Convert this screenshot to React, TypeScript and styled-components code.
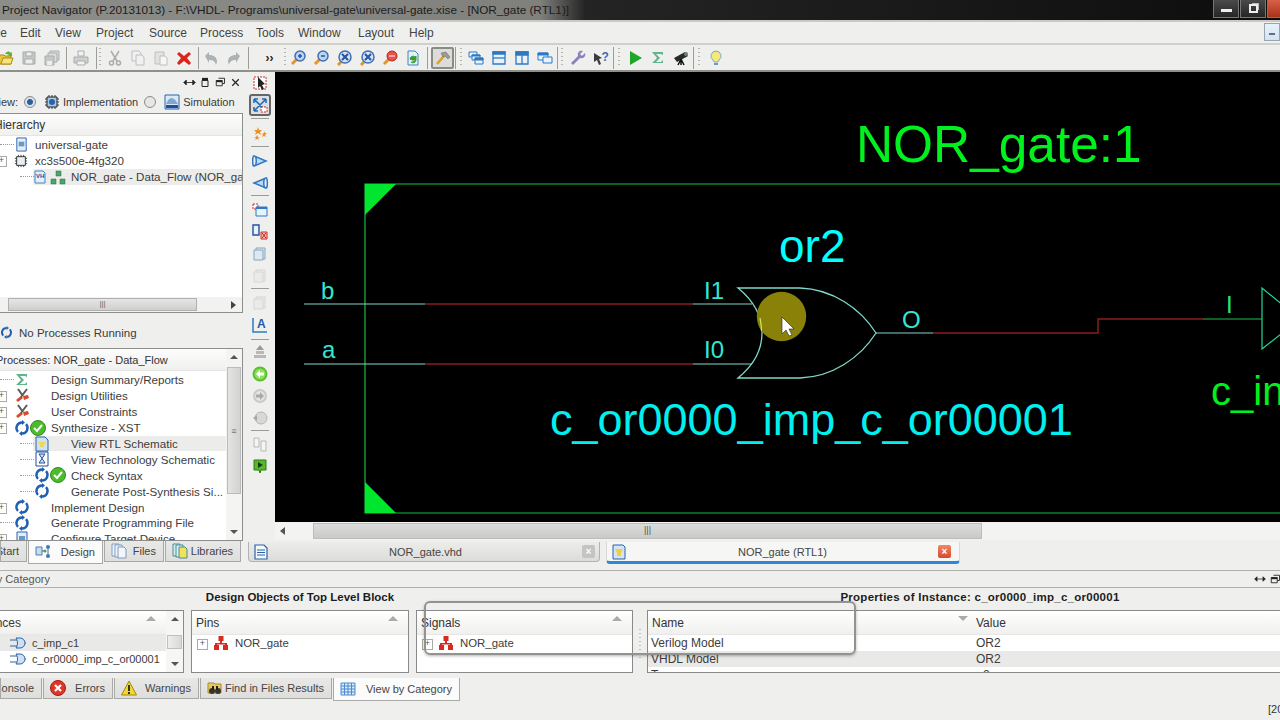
import type React from "react"
import styled, { createGlobalStyle } from "styled-components"

const Global = createGlobalStyle`
  html, body { margin: 0; padding: 0; background: #eff0ee; }
  * { box-sizing: border-box; }
`

const Root = styled.div`
  position: relative;
  width: 1280px;
  height: 720px;
  overflow: hidden;
  display: flex;
  flex-direction: column;
  background: #eff0ee;
  color: #3a3a3a;
  font: 12px "Liberation Sans", Arial, sans-serif;
  white-space: nowrap;
`

const TitleBar = styled.div`
  height: 22px;
  flex: none;
  display: flex;
  padding-left: 2px;
  line-height: 20px;
  color: #1c1c1c;
  font-size: 11.75px;
  border-bottom: 2px solid #c9cac6;
  background: linear-gradient(90deg, #8d8d8a 0, #80807d 540px, #242424 585px, #0d0d0d 100%);
`

const WinControls = styled.div`
  margin-left: auto;
  display: flex;
  height: 18px;
  gap: 1px;
`

const WinBtn = styled.div<{ $close?: boolean }>`
  width: ${(p) => (p.$close ? 13 : 26)}px;
  display: flex;
  align-items: center;
  justify-content: center;
  border: 1px solid #777;
  border-top: none;
  border-right-width: ${(p) => (p.$close ? 0 : 1)}px;
  background: ${(p) => (p.$close ? "linear-gradient(#d8604a, #a83418)" : "linear-gradient(#4a4a4a, #262626)")};
`

const MinBar = styled.div`
  width: 11px;
  height: 3px;
  margin-top: 3px;
  background: #eee;
`

const RestoreMark = styled.div`
  width: 9px;
  height: 9px;
  border: 2px solid #eee;
  box-shadow: 2px -2px 0 -1px #bbb;
`

const MenuBar = styled.div`
  height: 23px;
  flex: none;
  display: flex;
  align-items: center;
  border-bottom: 2px solid #cfd0cc;
  position: relative;
`

const MenuItem = styled.span<{ $w: number }>`
  width: ${(p) => p.$w}px;
  flex: none;
  color: #444;
`

const MdiRestore = styled.div`
  position: absolute;
  right: 0;
  top: 1px;
  width: 16px;
  height: 18px;
  border: 1px solid #9aa4ae;
  background: linear-gradient(#e8f1fa, #d3e4f5);
  display: flex;
  align-items: center;
  justify-content: center;
  &::after {
    content: "";
    width: 6px;
    height: 2px;
    margin-top: 3px;
    background: #607080;
  }
`

const ToolBar = styled.div`
  height: 27px;
  flex: none;
  display: flex;
  align-items: center;
  border-bottom: 2px solid #8f908c;
`

const ToolGroup = styled.div<{ $ml?: number }>`
  display: flex;
  flex: none;
  margin-left: ${(p) => p.$ml ?? 0}px;
`

const ToolBtn = styled.div<{ $on?: boolean }>`
  width: 23px;
  height: 22px;
  flex: none;
  display: flex;
  align-items: center;
  justify-content: center;
  border-radius: 2px;
  ${(p) => p.$on && "border: 2px solid #8a8a86; background: #dcdcd8;"}
`

const Chevrons = styled.span`
  font-weight: bold;
  font-size: 12px;
  color: #222;
`

const ToolSep = styled.div<{ $ml?: number }>`
  width: 1px;
  height: 22px;
  flex: none;
  margin-left: ${(p) => p.$ml ?? 0}px;
  background: #9c9c98;
`

const ToolGrip = styled.div<{ $ml?: number }>`
  width: 2px;
  height: 20px;
  flex: none;
  margin-left: ${(p) => p.$ml ?? 0}px;
  background: repeating-linear-gradient(#b4b4b0 0 1px, transparent 1px 4px);
`

const Main = styled.div`
  height: 494px;
  flex: none;
  display: flex;
`

const LeftCol = styled.div`
  width: 243px;
  flex: none;
  display: flex;
  flex-direction: column;
`

const PanelHead = styled.div`
  height: 20px;
  flex: none;
  display: flex;
  justify-content: flex-end;
  align-items: center;
  gap: 3px;
  padding-right: 1px;
`

const ViewRow = styled.div`
  height: 21px;
  flex: none;
  display: flex;
  align-items: center;
  padding-bottom: 1px;
  font-size: 11px;
`

const ClipLeft = styled.div<{ $w: number }>`
  width: ${(p) => p.$w}px;
  flex: none;
  display: flex;
  justify-content: flex-end;
  overflow: hidden;
`

const Radio = styled.div<{ $on?: boolean; $ml?: number }>`
  width: 12px;
  height: 12px;
  flex: none;
  margin: 0 8px 0 ${(p) => p.$ml ?? 0}px;
  border-radius: 50%;
  border: 1px solid #8a8a8a;
  background: ${(p) => (p.$on ? "radial-gradient(#2d5f96 0 2.5px, #d8e2ee 3.5px)" : "#e6e6e4")};
`

const ViewLabel = styled.span<{ $ml?: number }>`
  margin-left: ${(p) => p.$ml ?? 0}px;
`

const TreeBox = styled.div<{ $h: number }>`
  height: ${(p) => p.$h}px;
  flex: none;
  position: relative;
  overflow: hidden;
  background: #fff;
  border: 1px solid #8d8d8d;
  border-left: none;
`

const BoxHeader = styled.div`
  height: 22px;
  display: flex;
  align-items: center;
  background: linear-gradient(#fdfdfd, #f0f0ee);
  border-bottom: 1px solid #e4e4e2;
  margin-bottom: 1px;
`

const HeaderText = styled.span<{ $ml?: number; $fs?: number }>`
  margin-left: ${(p) => p.$ml ?? 0}px;
  font-size: ${(p) => p.$fs ?? 12}px;
  color: #333;
`

const TreeRow = styled.div<{ $i?: number; $sel?: boolean }>`
  height: 15.9px;
  display: flex;
  align-items: center;
  font-size: 11.6px;
  padding-left: ${(p) => p.$i ?? 0}px;
  background: ${(p) => (p.$sel ? "linear-gradient(90deg, transparent 33px, #ececea 33px)" : "transparent")};
`

const Expander = styled.div<{ $w?: number; $box?: boolean }>`
  width: ${(p) => p.$w ?? 14}px;
  height: 9px;
  flex: none;
  position: relative;
  border-bottom: ${(p) => (p.$box ? "none" : "1px dotted #999")};
  margin-bottom: ${(p) => (p.$box ? 0 : 8)}px;
  &::before {
    content: "${(p) => (p.$box ? "+" : "")}";
    position: absolute;
    left: -4px;
    top: 0;
    width: ${(p) => (p.$box ? 9 : 0)}px;
    height: ${(p) => (p.$box ? 9 : 0)}px;
    border: ${(p) => (p.$box ? "1px solid #aaa" : "none")};
    font: 9px/7px "Liberation Sans", sans-serif;
    text-align: center;
    color: #555;
  }
`

const IconPair = styled.div<{ $w?: number }>`
  width: ${(p) => p.$w ?? 32}px;
  flex: none;
  display: flex;
  align-items: center;
`

const RowLabel = styled.span<{ $ml?: number }>`
  margin-left: ${(p) => p.$ml ?? 5}px;
  color: #3c3c3c;
`

const HScroll = styled.div`
  position: absolute;
  left: 0;
  right: 0;
  bottom: 0;
  height: 15px;
  background: #f2f2f0;
  display: flex;
  align-items: center;
`

const HThumb = styled.div`
  margin-left: 8px;
  width: 189px;
  height: 13px;
  border: 1px solid #b0b0ae;
  background: linear-gradient(#e6e6e4, #cfcfcd);
  text-align: center;
  font: 8px/10px "Liberation Sans", sans-serif;
  color: #666;
`

const ArrowRight = styled.div`
  margin-left: 34px;
  width: 0;
  height: 0;
  border-left: 5px solid #444;
  border-top: 4px solid transparent;
  border-bottom: 4px solid transparent;
`

const StatusRow = styled.div`
  height: 35px;
  flex: none;
  display: flex;
  align-items: center;
  gap: 6px;
  padding: 4px 0 0 0;
  color: #3c3c3c;
  font-size: 11.5px;
`

const VScroll = styled.div`
  position: absolute;
  right: 0;
  top: 0;
  bottom: 0;
  width: 16px;
  background: #f4f4f2;
  display: flex;
  flex-direction: column;
  align-items: center;
`

const VArrow = styled.div<{ $down?: boolean }>`
  width: 0;
  height: 0;
  margin: 6px 0;
  border-left: 4px solid transparent;
  border-right: 4px solid transparent;
  ${(p) => (p.$down ? "border-top: 4px solid #555;" : "border-bottom: 4px solid #555;")}
`

const VThumb = styled.div`
  width: 14px;
  height: 127px;
  margin-top: 2px;
  border: 1px solid #bbb;
  background: linear-gradient(90deg, #e4e4e2, #d2d2d0);
  margin-bottom: auto;
  display: flex;
  align-items: center;
  justify-content: center;
  color: #777;
  font-size: 9px;
`

const TabStrip = styled.div<{ $ml?: number }>`
  display: flex;
  flex: none;
  height: 24px;
  margin-left: ${(p) => p.$ml ?? 0}px;
`

const BottomTab = styled.div<{ $w: number; $on?: boolean; $pl?: number }>`
  width: ${(p) => p.$w}px;
  flex: none;
  display: flex;
  align-items: center;
  justify-content: space-between;
  padding: 0 7px 0 ${(p) => p.$pl ?? 6}px;
  margin-right: 1px;
  height: ${(p) => (p.$on ? 23 : 21)}px;
  background: ${(p) => (p.$on ? "#fbfbfb" : "linear-gradient(#e8e8e6, #dededc)")};
  border: 1px solid #a9a9a7;
  border-top: none;
  color: #444;
  font-size: 11px;
  overflow: hidden;
`

const RightCol = styled.div`
  flex: 1;
  min-width: 0;
  margin-left: 5px;
  display: flex;
  flex-direction: column;
`

const WorkRow = styled.div`
  height: 468px;
  flex: none;
  display: flex;
`

const Strip = styled.div`
  width: 24px;
  flex: none;
  margin-right: 3px;
  display: flex;
  flex-direction: column;
  align-items: center;
`

const StripBtn = styled.div<{ $on?: boolean }>`
  width: 22px;
  height: 22px;
  flex: none;
  display: flex;
  align-items: center;
  justify-content: center;
  border-radius: 3px;
  ${(p) => p.$on && "border: 2px solid #66666a; background: #dedede;"}
`

const StripSep = styled.div<{ $mt?: number; $mb?: number }>`
  width: 18px;
  height: 1px;
  flex: none;
  margin: ${(p) => p.$mt ?? 2}px 0 ${(p) => p.$mb ?? 3}px;
  background: #9b9b98;
`

const CanvasCol = styled.div`
  flex: 1;
  min-width: 0;
  display: flex;
  flex-direction: column;
`

const CanvasSvg = styled.svg`
  display: block;
  width: 1005px;
  height: 450px;
  flex: none;
  background: #000;
`

const CanvasScroll = styled.div`
  height: 18px;
  flex: none;
  display: flex;
  align-items: center;
  background: #f3f3f1;
  padding-left: 5px;
`

const ArrowLeft = styled.div`
  width: 0;
  height: 0;
  border-right: 5px solid #555;
  border-top: 4px solid transparent;
  border-bottom: 4px solid transparent;
`

const CanvasThumb = styled.div`
  width: 669px;
  height: 16px;
  margin-left: 28px;
  border: 1px solid #bcbcba;
  background: linear-gradient(#dcdcda, #cacac8);
  text-align: center;
  color: #555;
  font: 9px/13px "Liberation Sans", sans-serif;
`

const EditorTabs = styled.div`
  height: 26px;
  flex: none;
  display: flex;
  padding-top: 2px;
  gap: 6px;
`

const EditorTab = styled.div<{ $on?: boolean; $w: number }>`
  width: ${(p) => p.$w}px;
  height: ${(p) => (p.$on ? 22 : 20)}px;
  flex: none;
  display: flex;
  align-items: center;
  padding: 0 ${(p) => (p.$on ? 8 : 4)}px 0 4px;
  border-radius: 0 0 4px 4px;
  border: 1px solid #b2b2b0;
  border-top: none;
  font-size: 11px;
  background: ${(p) => (p.$on ? "#f6f6f4" : "linear-gradient(#ececea, #dcdcda)")};
  ${(p) => p.$on && "border-color: #d8d8d6; border-bottom: 3px solid #2f86d6;"}
`

const EditorName = styled.span`
  flex: 1;
  text-align: center;
  color: #444;
`

const CloseBtn = styled.div<{ $red?: boolean }>`
  width: 13px;
  height: 13px;
  flex: none;
  border-radius: 2px;
  display: flex;
  align-items: center;
  justify-content: center;
  color: #fff;
  font: bold 10px/1 "Liberation Sans", sans-serif;
  background: ${(p) => (p.$red ? "linear-gradient(#f0866a, #d8492a)" : "#c4c4c2")};
`

const Lower = styled.div`
  flex: 1;
  display: flex;
  flex-direction: column;
  padding-top: 4px;
`

const LowerHead = styled.div`
  height: 18px;
  flex: none;
  display: flex;
  align-items: center;
  justify-content: space-between;
  border-top: 1px solid #b0b0ae;
  border-bottom: 1px solid #b0b0ae;
  font-size: 11px;
  color: #555;
`

const LowerHeadIcons = styled.div`
  display: flex;
  gap: 3px;
  margin-right: -1px;
`

const PaneTitles = styled.div`
  height: 22px;
  flex: none;
  display: flex;
  align-items: center;
  padding-bottom: 4px;
`

const PaneTitle = styled.div<{ $w: number; $ml?: number; $ls?: number }>`
  width: ${(p) => p.$w}px;
  margin-left: ${(p) => p.$ml ?? 0}px;
  letter-spacing: ${(p) => p.$ls ?? 0}px;
  text-align: center;
  font-weight: bold;
  font-size: 11.5px;
  color: #1c1c1c;
`

const Tables = styled.div`
  height: 63px;
  flex: none;
  display: flex;
  margin-left: -1px;
`

const TableBox = styled.div<{ $w: number; $ml?: number }>`
  width: ${(p) => p.$w}px;
  flex: none;
  margin-left: ${(p) => p.$ml ?? 0}px;
  position: relative;
  overflow: hidden;
  background: #fff;
  border: 1px solid #8a8a8a;
`

const TableHead = styled.div`
  height: 24px;
  display: flex;
  align-items: center;
  position: relative;
  background: linear-gradient(#fff, #f0f0ee);
  border-bottom: 1px solid #e6e6e4;
`

const HeadCell = styled.div<{ $w?: number; $pl?: number }>`
  width: ${(p) => (p.$w ? `${p.$w}px` : "auto")};
  flex: none;
  padding-left: ${(p) => p.$pl ?? 4}px;
  color: #333;
`

const SortMark = styled.div<{ $right: number; $down?: boolean }>`
  position: absolute;
  right: ${(p) => p.$right}px;
  top: 5px;
  width: 0;
  height: 0;
  border-left: 5px solid transparent;
  border-right: 5px solid transparent;
  ${(p) => (p.$down ? "border-top: 5px solid #aaa;" : "border-bottom: 5px solid #aaa;")}
`

const DataRow = styled.div<{ $shade?: boolean }>`
  height: 16px;
  display: flex;
  align-items: center;
  background: ${(p) => (p.$shade ? "#e9e9e7" : "transparent")};
  color: #3c3c3c;
`

const DataCell = styled.div<{ $w?: number; $pl?: number; $fs?: number }>`
  width: ${(p) => (p.$w ? `${p.$w}px` : "auto")};
  flex: none;
  display: flex;
  align-items: center;
  font-size: ${(p) => p.$fs ?? 12}px;
  padding-left: ${(p) => p.$pl ?? 3}px;
`

const TableScroll = styled.div`
  position: absolute;
  right: 0;
  top: 0;
  bottom: 0;
  width: 17px;
  background: #f6f6f4;
  display: flex;
  flex-direction: column;
  align-items: center;
`

const TableThumb = styled.div`
  width: 15px;
  height: 14px;
  margin: 8px 0 auto;
  border: 1px solid #c0c0be;
  background: linear-gradient(90deg, #eee, #d8d8d6);
`

const PaneGrip = styled.div`
  position: absolute;
  left: 639px;
  top: 629px;
  width: 2px;
  height: 30px;
  background: repeating-linear-gradient(#c0c0be 0 1px, transparent 1px 4px);
`

const BottomTabs = styled(TabStrip)`
  margin-top: 5px;
  align-items: flex-start;
`

const Corner = styled.div`
  padding: 1px 0 0 1268px;
  font-size: 11px;
  color: #333;
`

const Highlight = styled.div`
  position: absolute;
  left: 424px;
  top: 601px;
  width: 432px;
  height: 54px;
  border: 2px solid #92928f;
  border-radius: 6px;
  box-shadow: 0 1px 3px rgba(0, 0, 0, 0.3);
  pointer-events: none;
`

const Glyph = styled.svg<{ $faded?: boolean }>`
  display: block;
  flex: none;
  opacity: ${(p) => (p.$faded ? 0.45 : 1)};
`

const blue = "#2f78c4"
const grey = "#a9adad"
const org = "#e8922a"

const paths: Record<string, React.ReactNode> = {
  open: (
    <>
      <path d="M1 5h5l1 1h6v8H1z" fill="#e8c53a" stroke="#a88a1a" />
      <path d="M3 14l2-6h10l-2 6z" fill="#f7e37a" stroke="#a88a1a" />
      <path d="M7 4c2-3 4-3 6-1l1-1v4h-4l1-1c-1-1-2-1-4-1z" fill="#5cb52c" />
    </>
  ),
  save: (
    <>
      <path d="M2 2h12v12H2z" fill="#c4c8c8" stroke={grey} />
      <path d="M5 2h6v4H5zM4 9h8v5H4z" fill="#eee" stroke={grey} />
    </>
  ),
  saveall: (
    <>
      <path d="M6 1h9v9H6z" fill="#ddd" stroke={grey} />
      <path d="M4 3h9v9H4z" fill="#ddd" stroke={grey} />
      <path d="M1 6h9v9H1z" fill="#c4c8c8" stroke={grey} />
      <path d="M3 11h5v4H3z" fill="#eee" />
    </>
  ),
  print: (
    <>
      <path d="M5 1h6v5H5z" fill="#f2f2f2" stroke={grey} />
      <path d="M1 7h14v6H1z" fill="#cdd0d0" stroke={grey} />
      <path d="M4 11h8v4H4z" fill="#f2f2f2" stroke={grey} />
    </>
  ),
  cut: (
    <g fill="none" stroke="#a8acac" strokeWidth="1.5">
      <path d="M4 1l6 10M12 1L6 11" />
      <circle cx="4.5" cy="13" r="2" />
      <circle cx="11.5" cy="13" r="2" />
    </g>
  ),
  copy: (
    <g fill="#f1f1f1" stroke="#bcc0c0">
      <path d="M2 1h7l2 2v8H2z" />
      <path d="M6 5h6l2 2v8H6z" />
    </g>
  ),
  paste: (
    <g stroke="#bcc0c0">
      <path d="M2 2h9v12H2z" fill="#e2e2e0" />
      <path d="M7 6h5l2 2v7H7z" fill="#f6f6f6" />
    </g>
  ),
  del: <path d="M3 2l5 4 5-4 2 2-4 4 4 5-2 2-5-4-5 4-2-2 4-5-4-4z" fill="#d9261c" />,
  undo: <path d="M2 5l4-4v3c5 0 8 2 8 7l-1 3c-1-4-3-5-7-5v3z" transform="translate(0 1)" fill="#adb2b4" />,
  redo: <path d="M14 5l-4-4v3c-5 0-8 2-8 7l1 3c1-4 3-5 7-5v3z" transform="translate(0 1)" fill="#adb2b4" />,
  zoomin: (
    <>
      <path d="M2 14l5-5" stroke={org} strokeWidth="3" />
      <circle cx="10" cy="6" r="5" fill="#bcd6f2" stroke="#3f6fb4" strokeWidth="1.5" />
      <path d="M8 6h4M10 4v4" stroke="#2a52a0" strokeWidth="1.5" />
    </>
  ),
  zoomout: (
    <>
      <path d="M2 14l5-5" stroke={org} strokeWidth="3" />
      <circle cx="10" cy="6" r="5" fill="#bcd6f2" stroke="#3f6fb4" strokeWidth="1.5" />
      <path d="M8 6h4" stroke="#2a52a0" strokeWidth="1.5" />
    </>
  ),
  zoomfull: (
    <>
      <path d="M2 15l3-3" stroke={org} strokeWidth="3" />
      <circle cx="9" cy="7" r="6" fill="#d4e4f6" stroke="#3f6fb4" strokeWidth="1.5" />
      <path d="M6 4l6 6M12 4l-6 6" stroke="#2a52a0" strokeWidth="2" />
    </>
  ),
  zoomred: (
    <>
      <path d="M2 14l5-5" stroke={org} strokeWidth="3" />
      <circle cx="10" cy="6" r="5" fill="#e85048" stroke="#b02820" />
      <path d="M7 6h6" stroke="#fff" />
    </>
  ),
  refresh: (
    <>
      <path d="M3 1h7l3 3v11H3z" fill="#e4f0fa" stroke="#3f84c4" />
      <path d="M5 9a3 3 0 0 1 5-2l1-1v4H7l1-1a2 2 0 0 0-2 1zM11 10a3 3 0 0 1-5 2" stroke="#36a02c" fill="#36a02c" />
    </>
  ),
  hammer: (
    <>
      <path d="M2 14l7-8" stroke="#e0a020" strokeWidth="2.5" />
      <path d="M6 3l5-1 4 5-2 2-3-3-2 1z" fill="#9a9a96" stroke="#666" strokeWidth=".5" />
    </>
  ),
  cascade: (
    <g fill="#e8f2fb" stroke={blue}>
      <path d="M1 2h8v5H1z" />
      <path d="M4 5h8v5H4z" />
      <path d="M7 8h8v6H7z" />
      <path d="M7 8h8v2H7zM4 5h8v1H4z" fill={blue} />
    </g>
  ),
  hsplit: (
    <g fill="#e8f2fb" stroke={blue} strokeWidth="1.3">
      <path d="M2 2h12v12H2z" />
      <path d="M2 8h12" />
      <path d="M2 2h12v2H2z" fill={blue} />
    </g>
  ),
  vsplit: (
    <g fill="#e8f2fb" stroke={blue} strokeWidth="1.3">
      <path d="M2 2h12v12H2z" />
      <path d="M8 2v12" />
      <path d="M2 2h12v3H2z" fill={blue} />
    </g>
  ),
  tile: (
    <g fill="#e8f2fb" stroke={blue}>
      <path d="M1 3h10v7H1z" />
      <path d="M6 7h9v6H6z" />
      <path d="M1 3h10v2H1z" fill={blue} />
    </g>
  ),
  wrench: <path d="M15 3l-3 3-2-2 3-3c-3-1-6 1-5 5l-7 7 2 2 7-7c4 1 6-2 5-5z" fill="#8e80c0" />,
  help: (
    <>
      <path d="M1 3l8 5-3 1 2 5-2 1-2-5-3 2z" fill="#3a3a40" />
      <text x="8.5" y="11" fontSize="12" fontWeight="bold" fill="#3c6cb4" fontFamily="Liberation Sans">?</text>
    </>
  ),
  play: <path d="M3 1l12 7-12 7z" fill="#1fa52a" />,
  sigma: <path d="M2 2h11v3l-2-1H6l4 4-4 4h5l2-2v3H2l5-5z" fill="#62b48c" />,
  telescope: (
    <>
      <path d="M1 8l11-6 3 4-11 6z" fill="#2a2a2a" />
      <circle cx="13" cy="4" r="2" fill="#6d7f80" />
      <path d="M8 9l-3 6M8 9l3 6M8 9v6" stroke="#111" strokeWidth="1.5" />
    </>
  ),
  bulb: (
    <>
      <path d="M8 1a5 5 0 0 1 3 9l-1 2H6l-1-2a5 5 0 0 1 3-9z" fill="#f5e97a" stroke="#7ea8c8" />
      <path d="M6 13h4v2H6z" fill="#6c98c0" />
    </>
  ),
  select: (
    <>
      <path d="M2 2h12v12H2z" fill="#fff" stroke="#d02a2a" strokeDasharray="2 1" />
      <path d="M6 2l7 7-3 1 2 4-2 1-2-4-2 2z" fill="#222" />
    </>
  ),
  fit: (
    <>
      <path d="M2 2l11 11M14 2L3 13M2 2h4M2 2v4M14 2h-4M14 2v4M2 14h4M2 14v-4" stroke="#1d6fc0" strokeWidth="1.6" fill="none" />
      <path d="M9 10h6v5H9z" fill="#fff" stroke="#d02a2a" strokeDasharray="2 1" />
    </>
  ),
  stars: <path d="M6 2l1 3h3l-2 2 1 3-3-2-3 2 1-3-2-2h3zM12 6l1 2h2l-2 2 1 2-2-1-2 1 1-2-1-1 2-1zM5 10l1 2h2l-2 1 1 2-2-1-2 1 1-2-2-1h2z" fill={org} />,
  gateR: <path d="M2 3c3-1 3 11 0 10l12-5zM2 3c-2 1-2 9 0 10" fill="#bcd8f2" stroke={blue} strokeWidth="1.5" />,
  gateL: <path d="M14 3c-3-1-3 11 0 10L2 8zM14 3c2 1 2 9 0 10" fill="#bcd8f2" stroke={blue} strokeWidth="1.5" />,
  selA: (
    <>
      <path d="M1 2h5v5H1z" fill="#fff" stroke="#d02a2a" strokeDasharray="2 1" />
      <path d="M4 5h11v9H4z" fill="#e8f2fb" stroke={blue} />
      <path d="M4 5h11v2H4z" fill={blue} />
    </>
  ),
  selB: (
    <>
      <path d="M1 1h6v10H1z" fill="#e8f2fb" stroke="#2450a0" strokeWidth="1.4" />
      <path d="M9 8h6v7H9z" fill="#f4c8b8" stroke="#d02a2a" />
      <path d="M10 9l4 5M14 9l-4 5" stroke="#b02020" />
    </>
  ),
  docA: (
    <g fill="#dce8f2" stroke="#8aa4bc">
      <path d="M4 2h9v11H4z" />
      <path d="M2 4h9v10H2z" />
    </g>
  ),
  docB: (
    <g fill="#e4e4e2" stroke="#b8b8b6">
      <path d="M4 2h9v11H4z" />
      <path d="M2 4h9v10H2z" />
    </g>
  ),
  upA: (
    <>
      <path d="M8 1l4 5H4z" fill="#9a9a98" />
      <path d="M4 7h8v3H4zM2 11h12v3H2z" fill="#b8b8b6" />
    </>
  ),
  textA: (
    <>
      <path d="M1 1v14h14" fill="none" stroke={blue} strokeWidth="1.5" />
      <text x="5" y="11" fontSize="12" fontWeight="bold" fill="#1e5ca8" fontFamily="Liberation Sans">A</text>
    </>
  ),
  backGreen: (
    <>
      <circle cx="8" cy="8" r="7.5" fill="#58c02c" />
      <circle cx="8" cy="8" r="5.5" fill="#8ede5e" />
      <path d="M4 8l4-4v2.5h4v3H8V12z" fill="#fff" />
    </>
  ),
  fwdGrey: (
    <>
      <circle cx="8" cy="8" r="7" fill="#c8cac8" />
      <circle cx="8" cy="8" r="5" fill="#e4e4e2" />
      <path d="M12 8L8 4v2.5H4v3h4V12z" fill="#a8aaa8" />
    </>
  ),
  histGrey: (
    <>
      <circle cx="9" cy="8" r="6" fill="#d8d8d6" stroke="#b4b4b2" />
      <path d="M1 8l4-3v6z" fill="#a8a8a6" />
    </>
  ),
  squares: (
    <g fill="#f4f4f2" stroke="#b8b8b6">
      <path d="M2 2h5v9H2z" />
      <path d="M9 5h5v10H9z" />
    </g>
  ),
  flag: (
    <>
      <path d="M2 2h12v10H9l-1 3-1-3H2z" fill="#58b82c" stroke="#2c7a12" />
      <path d="M6 4l5 3-5 3z" fill="#143c0c" />
    </>
  ),
  spin: (
    <g fill="none" stroke="#1f5fb4" strokeWidth="2.4">
      <path d="M8 2.5a5.5 5.5 0 0 0-4 9.3" />
      <path d="M8 13.5a5.5 5.5 0 0 0 4-9.3" />
      <path d="M8 0v5l3-2.5zM8 16v-5l-3 2.5z" fill="#1f5fb4" stroke="none" />
    </g>
  ),
  ok: (
    <>
      <circle cx="8" cy="8" r="7.5" fill="#4cbb2c" stroke="#2c8c18" />
      <path d="M4 8l3 3 5-6" stroke="#fff" strokeWidth="2" fill="none" />
    </>
  ),
  tools: (
    <>
      <path d="M2 12l5-4 2 2-5 4z" fill="#d8492a" />
      <path d="M9 8l5-1 1 3-5 2z" fill="#d8492a" />
      <path d="M4 1l5 7M13 1L7 9" stroke="#5a5a58" strokeWidth="2" />
    </>
  ),
  rtl: (
    <>
      <path d="M2 1h9l3 3v11H2z" fill="#cfe2f4" stroke="#2a62a8" />
      <path d="M4 6h8l-2 3v2H6V9z" fill="#ecd85a" />
    </>
  ),
  tech: (
    <>
      <path d="M2 1h12v14H2z" fill="#fff" stroke="#1e4f98" />
      <path d="M5 3h6L5 12h6z" fill="#d6e4f2" stroke="#1e4f98" />
    </>
  ),
  blockA: (
    <>
      <path d="M1 2h8l2 2v10H1z" fill="#e4effa" stroke="#3f84c4" />
      <text x="2" y="9" fontSize="6" fontWeight="bold" fill="#1e4f98" fontFamily="Liberation Sans">VH</text>
    </>
  ),
  blockB: <path d="M6 2h5v5H6zM1 10h5v5H1zM10 10h5v5h-5z" fill="#4aa56c" stroke="#2c6c40" strokeWidth=".5" />,
  project: (
    <>
      <path d="M3 1h10v14H3z" fill="#e4eef8" stroke="#2a62a8" />
      <path d="M5 5h6v5H5z" fill="#6a98c8" />
    </>
  ),
  chip: (
    <>
      <path d="M3 3h10v10H3z" fill="#e6eef4" stroke="#222" />
      <path d="M1 5h2M1 8h2M1 11h2M13 5h2M13 8h2M13 11h2M5 1v2M8 1v2M11 1v2M5 13v2M8 13v2M11 13v2" stroke="#333" />
    </>
  ),
  impl: (
    <>
      <path d="M3 3h10v10H3z" fill="#a8c8e8" stroke="#222" />
      <path d="M1 5h2M1 8h2M1 11h2M13 5h2M13 8h2M13 11h2M5 1v2M8 1v2M11 1v2M5 13v2M8 13v2M11 13v2" stroke="#333" />
      <circle cx="8" cy="8" r="3" fill="#2a62a8" />
    </>
  ),
  sim: (
    <>
      <path d="M1 1h14v14H1z" fill="#dce8f4" stroke="#2a62a8" />
      <path d="M2 10c3-8 8-8 12 0z" fill="#7ea8d0" />
      <path d="M2 11h12v3H2z" fill="#1e4f98" />
    </>
  ),
  design: (
    <>
      <path d="M1 3h6v8H1z" fill="#c8dcf0" stroke="#4a7cb4" />
      <circle cx="13" cy="3" r="2" fill="#3a78b8" />
      <circle cx="13" cy="12" r="2" fill="#3a78b8" />
      <path d="M7 7h3M13 5v5" stroke="#666" />
      <circle cx="10" cy="7" r="1.5" fill="#48a060" />
    </>
  ),
  files: (
    <g fill="#f2f6fa" stroke="#7d9cc0">
      <path d="M1 1h7v12H1z" />
      <path d="M4 2h7v12H4z" />
      <path d="M7 4h6l2 2v9H7z" />
    </g>
  ),
  libs: (
    <g stroke="#4a8a98">
      <path d="M1 1h7v12H1z" fill="#d4eef4" />
      <path d="M4 2h7v12H4z" fill="#e0f2f0" />
      <path d="M7 4h6l2 2v9H7z" fill="#f2e25a" />
    </g>
  ),
  page: (
    <>
      <path d="M2 1h9l3 3v11H2z" fill="#f2f8fd" stroke="#2a62a8" strokeWidth="1.2" />
      <path d="M4 6h8M4 8.5h8M4 11h8" stroke="#2a62a8" />
    </>
  ),
  rtlTab: (
    <>
      <path d="M2 1h10l2 2v12H2z" fill="#d4e4f4" stroke="#2a62a8" />
      <path d="M4 5h8l-2 4v3H6V9z" fill="#f0d040" />
    </>
  ),
  net: <path d="M5.5 1h5v5h-5zM7 6h2v2h5v2h1v5h-5v-5h2V9.5H4V10h2v5H1v-5h1V8h5z" fill="#d92a20" />,
  inst: (
    <>
      <path d="M0 5h8M0 11h8" stroke="#2a62a8" />
      <path d="M6 3h4a5 5 0 0 1 0 10H6c2-3 2-7 0-10zM15 8h1" fill="#cfe0f2" stroke="#2a62a8" />
    </>
  ),
  errors: (
    <>
      <circle cx="8" cy="8" r="7.5" fill="#e0362a" stroke="#a01810" />
      <path d="M5 5l6 6M11 5l-6 6" stroke="#fff" strokeWidth="2.2" />
    </>
  ),
  warn: (
    <>
      <path d="M8 1l7.5 14H.5z" fill="#f4d630" stroke="#a08810" />
      <path d="M8 5v6M8 12v2" stroke="#222" strokeWidth="1.8" />
    </>
  ),
  find: (
    <>
      <path d="M1 3h6l1 1h6v9H1z" fill="#e8c860" stroke="#a88a30" />
      <circle cx="5" cy="11" r="3" fill="#333" />
      <circle cx="11" cy="11" r="3" fill="#333" />
      <path d="M5 6h2v4H5zM9 6h2v4H9z" fill="#222" />
    </>
  ),
  grid: (
    <g fill="#dcebf9" stroke="#4a8ad0">
      <path d="M1 2h14v12H1z" />
      <path d="M1 5h14M1 8h14M1 11h14M4.5 2v12M8 2v12M11.5 2v12" fill="none" />
    </g>
  ),
  dock: (
    <g fill="none" stroke="#222" strokeWidth="1.3">
      <path d="M4 6h8v8H4z" />
      <path d="M4 4h8" strokeWidth="3" />
    </g>
  ),
  float: (
    <g fill="none" stroke="#222" strokeWidth="1.2">
      <path d="M6 3h8v7h-3" />
      <path d="M3 6h8v7H3z" />
      <path d="M3 7h8" strokeWidth="2.5" />
    </g>
  ),
  close: <path d="M4 4l8 8M12 4l-8 8" stroke="#222" strokeWidth="1.5" />,
  arrows: <path d="M1 8h14M1 8l3-3v6zM15 8l-3-3v6z" fill="#222" stroke="#222" />,
}

const Icon = ({ n, s = 16, faded }: { n: string; s?: number; faded?: boolean }) => (
  <Glyph viewBox="0 0 16 16" width={s} height={s} $faded={faded}>
    {paths[n]}
  </Glyph>
)

const menus: [string, number][] = [
  ["File", 20],
  ["Edit", 35],
  ["View", 41],
  ["Project", 53],
  ["Source", 51],
  ["Process", 56],
  ["Tools", 42],
  ["Window", 60],
  ["Layout", 51],
  ["Help", 40],
]

const Tool = ({ n, on }: { n: string; on?: boolean }) => (
  <ToolBtn $on={on}>
    <Icon n={n} />
  </ToolBtn>
)

const StripIcon = ({ n, on, faded }: { n: string; on?: boolean; faded?: boolean }) => (
  <StripBtn $on={on}>
    <Icon n={n} faded={faded} />
  </StripBtn>
)

type ProcRow = { label: string; icons: string[]; exp?: boolean; i?: number; sel?: boolean }

const processRows: ProcRow[] = [
  { label: "Design Summary/Reports", icons: ["sigma"] },
  { label: "Design Utilities", icons: ["tools"], exp: true },
  { label: "User Constraints", icons: ["tools"], exp: true },
  { label: "Synthesize - XST", icons: ["spin", "ok"], exp: true },
  { label: "View RTL Schematic", icons: ["rtl"], i: 20, sel: true },
  { label: "View Technology Schematic", icons: ["tech"], i: 20 },
  { label: "Check Syntax", icons: ["spin", "ok"], i: 20 },
  { label: "Generate Post-Synthesis Si...", icons: ["spin"], i: 20 },
  { label: "Implement Design", icons: ["spin"], exp: true },
  { label: "Generate Programming File", icons: ["spin"] },
  { label: "Configure Target Device", icons: ["project"], exp: true },
]

const wire = "#7fd8c8"
const dark = "#8c1c1c"

const Schematic = () => (
  <CanvasSvg viewBox="275 72 1005 450" fontFamily="Liberation Sans, Arial, sans-serif">
    <path d="M1300 184H365V513H1300" stroke="#12c23a" strokeWidth="1.2" fill="none" />
    <path d="M365 184h31l-31 31zM365 513h31l-31-31z" fill="#00e62e" />
    <text x="856" y="162" fontSize="51.4" fill="#00f21e">NOR_gate:1</text>
    <text x="779" y="262" fontSize="46" fill="#00ffff">or2</text>
    <text x="550" y="435" fontSize="45" fill="#00f0f0">c_or0000_imp_c_or00001</text>
    <text x="1211" y="405" fontSize="40" fill="#00f21e">c_in</text>
    <g fontSize="24" fill="#35e6d2">
      <text x="704" y="299">I1</text>
      <text x="704" y="358">I0</text>
      <text x="902" y="328">O</text>
      <text x="321" y="299">b</text>
      <text x="322" y="358">a</text>
      <text x="1226" y="313" fill="#2ce07a">I</text>
    </g>
    <path d="M304 304H425M304 364H425M693 304H752M693 364H752M876 333H933" stroke={wire} strokeWidth="1.2" fill="none" />
    <path d="M425 304H693M425 364H693M933 333H1098V319H1203" stroke={dark} strokeWidth="1.5" fill="none" />
    <path d="M1203 319H1262" stroke="#1cc24a" strokeWidth="1.2" />
    <path d="M1262 288V349L1300 319z" stroke="#20d8a0" strokeWidth="1.2" fill="none" />
    <path d="M738 288H800C832 289 860 308 876 333C860 358 832 377 800 378H738C770 352 770 314 738 288z" stroke={wire} strokeWidth="1.3" fill="none" />
    <circle cx="781.5" cy="316.5" r="24.7" fill="#8a8208" />
    <path d="M760 318Q761.500 325 761.500 331" stroke="#c8e860" strokeWidth="1.2" fill="none" />
    <path d="M782 317v17l4-4 3 6 3-1-3-6h5z" fill="#fff" stroke="#222" strokeWidth=".6" />
  </CanvasSvg>
)

export default function App() {
  return (
    <Root>
      <Global />
      <TitleBar>
        Project Navigator (P.20131013) - F:\VHDL- Programs\universal-gate\universal-gate.xise - [NOR_gate (RTL1)]
        <WinControls>
          <WinBtn>
            <MinBar />
          </WinBtn>
          <WinBtn>
            <RestoreMark />
          </WinBtn>
          <WinBtn $close />
        </WinControls>
      </TitleBar>

      <MenuBar>
        {menus.map(([label, w]) => (
          <MenuItem key={label} $w={w}>
            {label === "File" ? <ClipLeft $w={7}>File</ClipLeft> : label}
          </MenuItem>
        ))}
        <MdiRestore />
      </MenuBar>

      <ToolBar>
        <ToolGroup $ml={-6}>
          <Tool n="open" />
          <Tool n="save" />
          <Tool n="saveall" />
        </ToolGroup>
        <ToolSep $ml={3} />
        <ToolGroup $ml={2}>
          <Tool n="print" />
        </ToolGroup>
        <ToolSep $ml={4} />
        <ToolGrip $ml={2} />
        <ToolGroup $ml={2}>
          <Tool n="cut" />
          <Tool n="copy" />
          <Tool n="paste" />
          <Tool n="del" />
        </ToolGroup>
        <ToolSep $ml={3} />
        <ToolGroup>
          <Tool n="undo" />
          <Tool n="redo" />
        </ToolGroup>
        <ToolSep $ml={3} />
        <ToolGroup $ml={9}>
          <ToolBtn>
            <Chevrons>››</Chevrons>
          </ToolBtn>
        </ToolGroup>
        <ToolGrip $ml={3} />
        <ToolGroup>
          <Tool n="zoomin" />
          <Tool n="zoomout" />
          <Tool n="zoomfull" />
          <Tool n="zoomfull" />
          <Tool n="zoomred" />
          <Tool n="refresh" />
        </ToolGroup>
        <ToolSep $ml={3} />
        <ToolGroup $ml={3}>
          <Tool n="hammer" on />
        </ToolGroup>
        <ToolSep $ml={1} />
        <ToolGrip $ml={4} />
        <ToolGroup $ml={2}>
          <Tool n="cascade" />
          <Tool n="hsplit" />
          <Tool n="vsplit" />
          <Tool n="tile" />
        </ToolGroup>
        <ToolSep $ml={1} />
        <ToolGrip $ml={3} />
        <ToolGroup $ml={3}>
          <Tool n="wrench" />
          <Tool n="help" />
        </ToolGroup>
        <ToolSep $ml={1} />
        <ToolGrip $ml={4} />
        <ToolGroup $ml={3}>
          <Tool n="play" />
          <Tool n="sigma" />
          <Tool n="telescope" />
        </ToolGroup>
        <ToolSep $ml={1} />
        <ToolGrip $ml={4} />
        <ToolGroup $ml={4}>
          <Tool n="bulb" />
        </ToolGroup>
      </ToolBar>

      <Main>
        <LeftCol>
          <PanelHead>
            <Icon n="arrows" s={13} />
            <Icon n="dock" s={12} />
            <Icon n="float" s={12} />
            <Icon n="close" s={13} />
          </PanelHead>
          <ViewRow>
            <ClipLeft $w={18}>View:</ClipLeft>
            <Radio $on $ml={6} />
            <Icon n="impl" s={16} />
            <ViewLabel $ml={3}>Implementation</ViewLabel>
            <Radio $ml={6} />
            <Icon n="sim" s={16} />
            <ViewLabel $ml={3}>Simulation</ViewLabel>
          </ViewRow>
          <TreeBox $h={200}>
            <BoxHeader>
              <HeaderText $ml={-6}>Hierarchy</HeaderText>
            </BoxHeader>
            <TreeRow>
              <Expander />
              <IconPair $w={16}>
                <Icon n="project" s={15} />
              </IconPair>
              <RowLabel>universal-gate</RowLabel>
            </TreeRow>
            <TreeRow>
              <Expander $box />
              <IconPair $w={16}>
                <Icon n="chip" s={14} />
              </IconPair>
              <RowLabel>xc3s500e-4fg320</RowLabel>
            </TreeRow>
            <TreeRow $i={20} $sel>
              <Expander />
              <IconPair $w={32}>
                <Icon n="blockA" />
                <Icon n="blockB" />
              </IconPair>
              <RowLabel>NOR_gate - Data_Flow (NOR_gate - Data_Flow)</RowLabel>
            </TreeRow>
            <HScroll>
              <HThumb>|||</HThumb>
              <ArrowRight />
            </HScroll>
          </TreeBox>
          <StatusRow>
            <Icon n="spin" s={13} />
            No Processes Running
          </StatusRow>
          <TreeBox $h={193}>
            <BoxHeader>
              <HeaderText $ml={-4} $fs={11}>
                Processes: NOR_gate - Data_Flow
              </HeaderText>
            </BoxHeader>
            {processRows.map((r) => (
              <TreeRow key={r.label} $i={r.i} $sel={r.sel}>
                <Expander $box={r.exp} />
                <IconPair>
                  {r.icons.map((n) => (
                    <Icon key={n} n={n} />
                  ))}
                </IconPair>
                <RowLabel>{r.label}</RowLabel>
              </TreeRow>
            ))}
            <VScroll>
              <VArrow />
              <VThumb>≡</VThumb>
              <VArrow $down />
            </VScroll>
          </TreeBox>
          <TabStrip>
            <BottomTab $w={27} $pl={0}>
              <ClipLeft $w={18}>Start</ClipLeft>
            </BottomTab>
            <BottomTab $w={75} $on $pl={6}>
              <Icon n="design" />
              Design
            </BottomTab>
            <BottomTab $w={60}>
              <Icon n="files" />
              Files
            </BottomTab>
            <BottomTab $w={76}>
              <Icon n="libs" />
              Libraries
            </BottomTab>
          </TabStrip>
        </LeftCol>

        <RightCol>
          <WorkRow>
            <Strip>
              <StripIcon n="select" />
              <StripIcon n="fit" on />
              <StripSep />
              <StripIcon n="stars" />
              <StripSep />
              <StripIcon n="gateR" />
              <StripIcon n="gateL" />
              <StripSep $mt={1} />
              <StripIcon n="selA" />
              <StripIcon n="selB" />
              <StripIcon n="docA" />
              <StripIcon n="docB" faded />
              <StripSep $mt={1} />
              <StripIcon n="docB" faded />
              <StripIcon n="textA" />
              <StripSep $mt={3} $mb={1} />
              <StripIcon n="upA" />
              <StripIcon n="backGreen" />
              <StripIcon n="fwdGrey" />
              <StripIcon n="histGrey" />
              <StripSep $mt={1} $mb={2} />
              <StripIcon n="squares" />
              <StripIcon n="flag" />
            </Strip>
            <CanvasCol>
              <Schematic />
              <CanvasScroll>
                <ArrowLeft />
                <CanvasThumb>|||</CanvasThumb>
              </CanvasScroll>
            </CanvasCol>
          </WorkRow>
          <EditorTabs>
            <EditorTab $w={352}>
              <Icon n="page" />
              <EditorName>NOR_gate.vhd</EditorName>
              <CloseBtn>×</CloseBtn>
            </EditorTab>
            <EditorTab $w={354} $on>
              <Icon n="rtlTab" />
              <EditorName>NOR_gate (RTL1)</EditorName>
              <CloseBtn $red>×</CloseBtn>
            </EditorTab>
          </EditorTabs>
        </RightCol>
      </Main>

      <Lower>
        <LowerHead>
          <ClipLeft $w={50}>View by Category</ClipLeft>
          <LowerHeadIcons>
            <Icon n="arrows" s={12} />
            <Icon n="float" s={12} />
          </LowerHeadIcons>
        </LowerHead>
        <PaneTitles>
          <PaneTitle $w={600}>Design Objects of Top Level Block</PaneTitle>
          <PaneTitle $w={600} $ml={80} $ls={0.26}>
            Properties of Instance: c_or0000_imp_c_or00001
          </PaneTitle>
        </PaneTitles>
        <Tables>
          <TableBox $w={185}>
            <TableHead>
              <ClipLeft $w={21}>Instances</ClipLeft>
              <SortMark $right={27} />
            </TableHead>
            <DataRow $shade>
              <DataCell $pl={10}>
                <Icon n="inst" />
              </DataCell>
              <DataCell $pl={6} $fs={11}>
                c_imp_c1
              </DataCell>
            </DataRow>
            <DataRow>
              <DataCell $pl={10}>
                <Icon n="inst" />
              </DataCell>
              <DataCell $pl={6} $fs={11}>
                c_or0000_imp_c_or00001
              </DataCell>
            </DataRow>
            <TableScroll>
              <VArrow />
              <TableThumb />
              <VArrow $down />
            </TableScroll>
          </TableBox>
          <TableBox $w={218} $ml={7}>
            <TableHead>
              <HeadCell>Pins</HeadCell>
              <SortMark $right={10} />
            </TableHead>
            <DataRow>
              <DataCell $pl={9}>
                <Expander $w={8} $box />
              </DataCell>
              <DataCell $pl={4}>
                <Icon n="net" />
              </DataCell>
              <DataCell $pl={6} $fs={11.4}>
                NOR_gate
              </DataCell>
            </DataRow>
          </TableBox>
          <TableBox $w={217} $ml={7}>
            <TableHead>
              <HeadCell>Signals</HeadCell>
              <SortMark $right={10} />
            </TableHead>
            <DataRow>
              <DataCell $pl={9}>
                <Expander $w={8} $box />
              </DataCell>
              <DataCell $pl={4}>
                <Icon n="net" />
              </DataCell>
              <DataCell $pl={6} $fs={11.4}>
                NOR_gate
              </DataCell>
            </DataRow>
          </TableBox>
          <TableBox $w={640} $ml={14}>
            <TableHead>
              <HeadCell $w={320}>Name</HeadCell>
              <HeadCell $w={200} $pl={8}>
                Value
              </HeadCell>
              <SortMark $right={318} $down />
            </TableHead>
            <DataRow>
              <DataCell $w={325}>Verilog Model</DataCell>
              <DataCell>OR2</DataCell>
            </DataRow>
            <DataRow $shade>
              <DataCell $w={325}>VHDL Model</DataCell>
              <DataCell>OR2</DataCell>
            </DataRow>
            <DataRow>
              <DataCell $w={325}>Type</DataCell>
              <DataCell $pl={10}>2</DataCell>
            </DataRow>
          </TableBox>
        </Tables>
        <BottomTabs>
          <BottomTab $w={42} $pl={0}>
            <ClipLeft $w={33}>Console</ClipLeft>
          </BottomTab>
          <BottomTab $w={70}>
            <Icon n="errors" />
            Errors
          </BottomTab>
          <BottomTab $w={85}>
            <Icon n="warn" />
            Warnings
          </BottomTab>
          <BottomTab $w={132}>
            <Icon n="find" />
            Find in Files Results
          </BottomTab>
          <BottomTab $w={127} $on>
            <Icon n="grid" />
            View by Category
          </BottomTab>
        </BottomTabs>
        <Corner>[2016</Corner>
      </Lower>
      <PaneGrip />
      <Highlight />
    </Root>
  )
}
